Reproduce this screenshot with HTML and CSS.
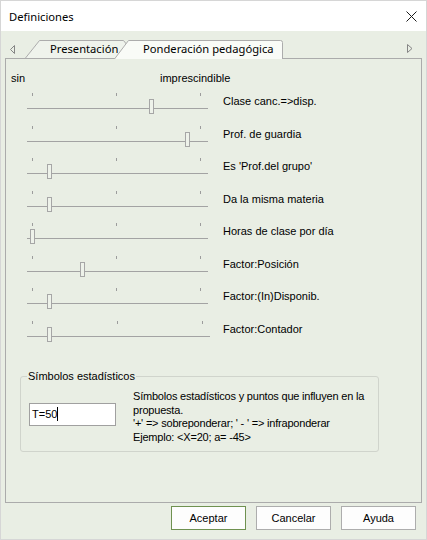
FILE: index.html
```html
<!DOCTYPE html>
<html lang="es">
<head>
    <meta charset="UTF-8">
    <title>Definiciones</title>
    <link rel="stylesheet" href="styles.css">
</head>
<body>

<div class="window">
    <div class="titlebar">
        <span class="title">Definiciones</span>
        <svg class="close" width="11" height="11" viewBox="0 0 11 11"><path d="M0.5 0.5L10.5 10.5M10.5 0.5L0.5 10.5" stroke="#1b1b1b" stroke-width="1"/></svg>
    </div>

    <div class="client">
        <div class="tabstrip">
            <svg class="scroll-arrow left" width="5" height="9" viewBox="0 0 5 9"><path d="M4.5 0.5L0.5 4.5L4.5 8.5Z" fill="none" stroke="#858585"/></svg>
            <div class="tab">
                <svg class="tab-shape" width="113" height="18" viewBox="0 0 113 18"><path d="M0.5 18L14.5 0.5L98.5 0.5L112.5 18" fill="#eff3ec" stroke="#acacac"/></svg>
                <span class="tab-text">Presentación</span>
            </div>
            <div class="tab active">
                <svg class="tab-shape" width="169" height="19" viewBox="0 0 169 19"><path d="M0.5 19L14.5 0.5L166.5 0.5Q168.5 0.5 168.5 2.5L168.5 19" fill="#f9fbf7" stroke="#acacac"/></svg>
                <span class="tab-text">Ponderación pedagógica</span>
            </div>
            <svg class="scroll-arrow right" width="6" height="9" viewBox="0 0 6 9"><path d="M0.5 0.5L5 4.5L0.5 8.5Z" fill="none" stroke="#858585"/></svg>
        </div>

        <div class="panel">
            <div class="scale-labels">
                <span class="scale-min">sin</span>
                <span>imprescindible</span>
            </div>

            <div class="slider-row">
                <div class="slider"><div class="ticks"><i></i><i></i><i></i></div><div class="track"></div><div class="thumb" style="--v:71"></div></div>
                <span class="slider-label">Clase canc.=&gt;disp.</span>
            </div>
            <div class="slider-row">
                <div class="slider"><div class="ticks"><i></i><i></i><i></i></div><div class="track"></div><div class="thumb" style="--v:92"></div></div>
                <span class="slider-label">Prof. de guardia</span>
            </div>
            <div class="slider-row">
                <div class="slider"><div class="ticks"><i></i><i></i><i></i></div><div class="track"></div><div class="thumb" style="--v:10"></div></div>
                <span class="slider-label">Es 'Prof.del grupo'</span>
            </div>
            <div class="slider-row">
                <div class="slider"><div class="ticks"><i></i><i></i><i></i></div><div class="track"></div><div class="thumb" style="--v:10"></div></div>
                <span class="slider-label">Da la misma materia</span>
            </div>
            <div class="slider-row">
                <div class="slider"><div class="ticks"><i></i><i></i><i></i></div><div class="track"></div><div class="thumb" style="--v:0"></div></div>
                <span class="slider-label">Horas de clase por día</span>
            </div>
            <div class="slider-row">
                <div class="slider"><div class="ticks"><i></i><i></i><i></i></div><div class="track"></div><div class="thumb" style="--v:30"></div></div>
                <span class="slider-label">Factor:Posición</span>
            </div>
            <div class="slider-row">
                <div class="slider"><div class="ticks"><i></i><i></i><i></i></div><div class="track"></div><div class="thumb" style="--v:10"></div></div>
                <span class="slider-label">Factor:(In)Disponib.</span>
            </div>
            <div class="slider-row">
                <div class="slider wide"><div class="ticks"><i></i><i></i><i></i></div><div class="track"></div><div class="thumb" style="--v:10"></div></div>
                <span class="slider-label">Factor:Contador</span>
            </div>

            <fieldset class="group">
                <legend>Símbolos estadísticos</legend>
                <div class="group-body">
                    <div class="textbox">T=50<span class="caret"></span></div>
                    <p class="hint">Símbolos estadísticos y puntos que influyen en la<br>propuesta.<br>'+' =&gt; sobreponderar; ' - ' =&gt; infraponderar<br>Ejemplo: &lt;X=20; a= -45&gt;</p>
                </div>
            </fieldset>
        </div>

        <div class="buttons">
            <button class="default">Aceptar</button>
            <button>Cancelar</button>
            <button>Ayuda</button>
        </div>
    </div>
</div>

</body>
</html>
```

FILE: styles.css
```css
body {
    margin: 0;
    font-family: "Liberation Sans", Arial, sans-serif;
    font-size: 11px;
    color: #000;
}
.window {
    width: 427px;
    height: 540px;
    box-sizing: border-box;
    border: 1px solid #d6d6d6;
    display: flex;
    flex-direction: column;
}
.titlebar {
    height: 30px;
    background-color: #fff;
    display: flex;
    align-items: center;
    justify-content: space-between;
    padding: 0 9px 0 8px;
}
.title {
    font-family: "Noto Sans", sans-serif;
    font-size: 11.2px;
}
.close {
    margin-top: 1px;
}
.client {
    flex: 1;
    background-color: #e9eee4;
    padding: 9px 4px 0;
}

/* tabs */
.tabstrip {
    position: relative;
    z-index: 1;
    height: 19px;
    margin-bottom: -1px;
    display: flex;
    align-items: flex-start;
}
.scroll-arrow.left {
    margin: 5px 10px 0 5px;
}
.scroll-arrow.right {
    margin: 4px 9px 0 auto;
}
.tab {
    position: relative;
    width: 113px;
    height: 18px;
}
.tab.active {
    width: 169px;
    height: 19px;
    margin-left: -24px;
}
.tab-shape {
    position: absolute;
    top: 0;
    left: 0;
}
.tab-text {
    position: relative;
    display: block;
    padding-left: 25px;
    line-height: 17px;
    font-family: "Noto Sans", sans-serif;
    font-size: 11.2px;
    white-space: nowrap;
}
.tab.active .tab-text {
    padding-left: 29px;
}

/* panel */
.panel {
    height: 445px;
    box-sizing: border-box;
    border: 1px solid #ababab;
}
.scale-labels {
    display: flex;
    padding: 12px 0 6px 5px;
    line-height: 14px;
}
.scale-min {
    width: 149px;
}
.slider-row {
    display: flex;
    align-items: flex-start;
    height: 32.5px;
}
.slider {
    position: relative;
    width: 181px;
    margin-left: 21px;
}
.slider.wide {
    width: 183px;
    margin-right: -2px;
}
.ticks {
    display: flex;
    justify-content: space-between;
    padding: 2px 7px 0 5px;
}
.ticks i {
    width: 1px;
    height: 3px;
    background-color: #9c9c9c;
}
.track {
    height: 1px;
    margin-top: 12px;
    background-color: #a3a3a3;
}
.thumb {
    position: absolute;
    top: 8px;
    left: calc(3px + var(--v) * 1.68px);
    width: 5px;
    height: 15px;
    box-sizing: border-box;
    border: 1px solid #a6a6a6;
    background-color: #eef2ea;
}
.slider-label {
    margin: 3px 0 0 15px;
    line-height: 14px;
    white-space: nowrap;
}

/* group box */
.group {
    width: 359px;
    box-sizing: border-box;
    margin: 18px 0 0 14px;
    padding: 0 0 7px 8px;
    border: 1px solid #d0d4cc;
    border-radius: 3px;
}
.group legend {
    margin-left: -2px;
    padding: 0 1px;
    line-height: 14px;
}
.group-body {
    display: flex;
    align-items: flex-start;
    padding-top: 7px;
}
.textbox {
    width: 87px;
    height: 23px;
    box-sizing: border-box;
    margin-top: 13px;
    padding: 3px 2px;
    border: 1px solid #a0a0a0;
    background-color: #fff;
    line-height: 15px;
}
.caret {
    display: inline-block;
    width: 1px;
    height: 14px;
    vertical-align: -3px;
    background-color: #000;
}
.hint {
    margin: 0 0 0 17px;
    line-height: 13.5px;
    letter-spacing: -0.2px;
    white-space: nowrap;
}

/* dialog buttons */
.buttons {
    display: flex;
    justify-content: flex-end;
    gap: 10px;
    margin-top: 3px;
    padding-right: 6px;
}
button {
    width: 75px;
    height: 24px;
    padding: 0;
    border: 1px solid #adadad;
    background-color: #fdfdfd;
    font-family: "Liberation Sans", Arial, sans-serif;
    font-size: 11px;
    color: #000;
}
button.default {
    border-color: #6f9150;
}
```
